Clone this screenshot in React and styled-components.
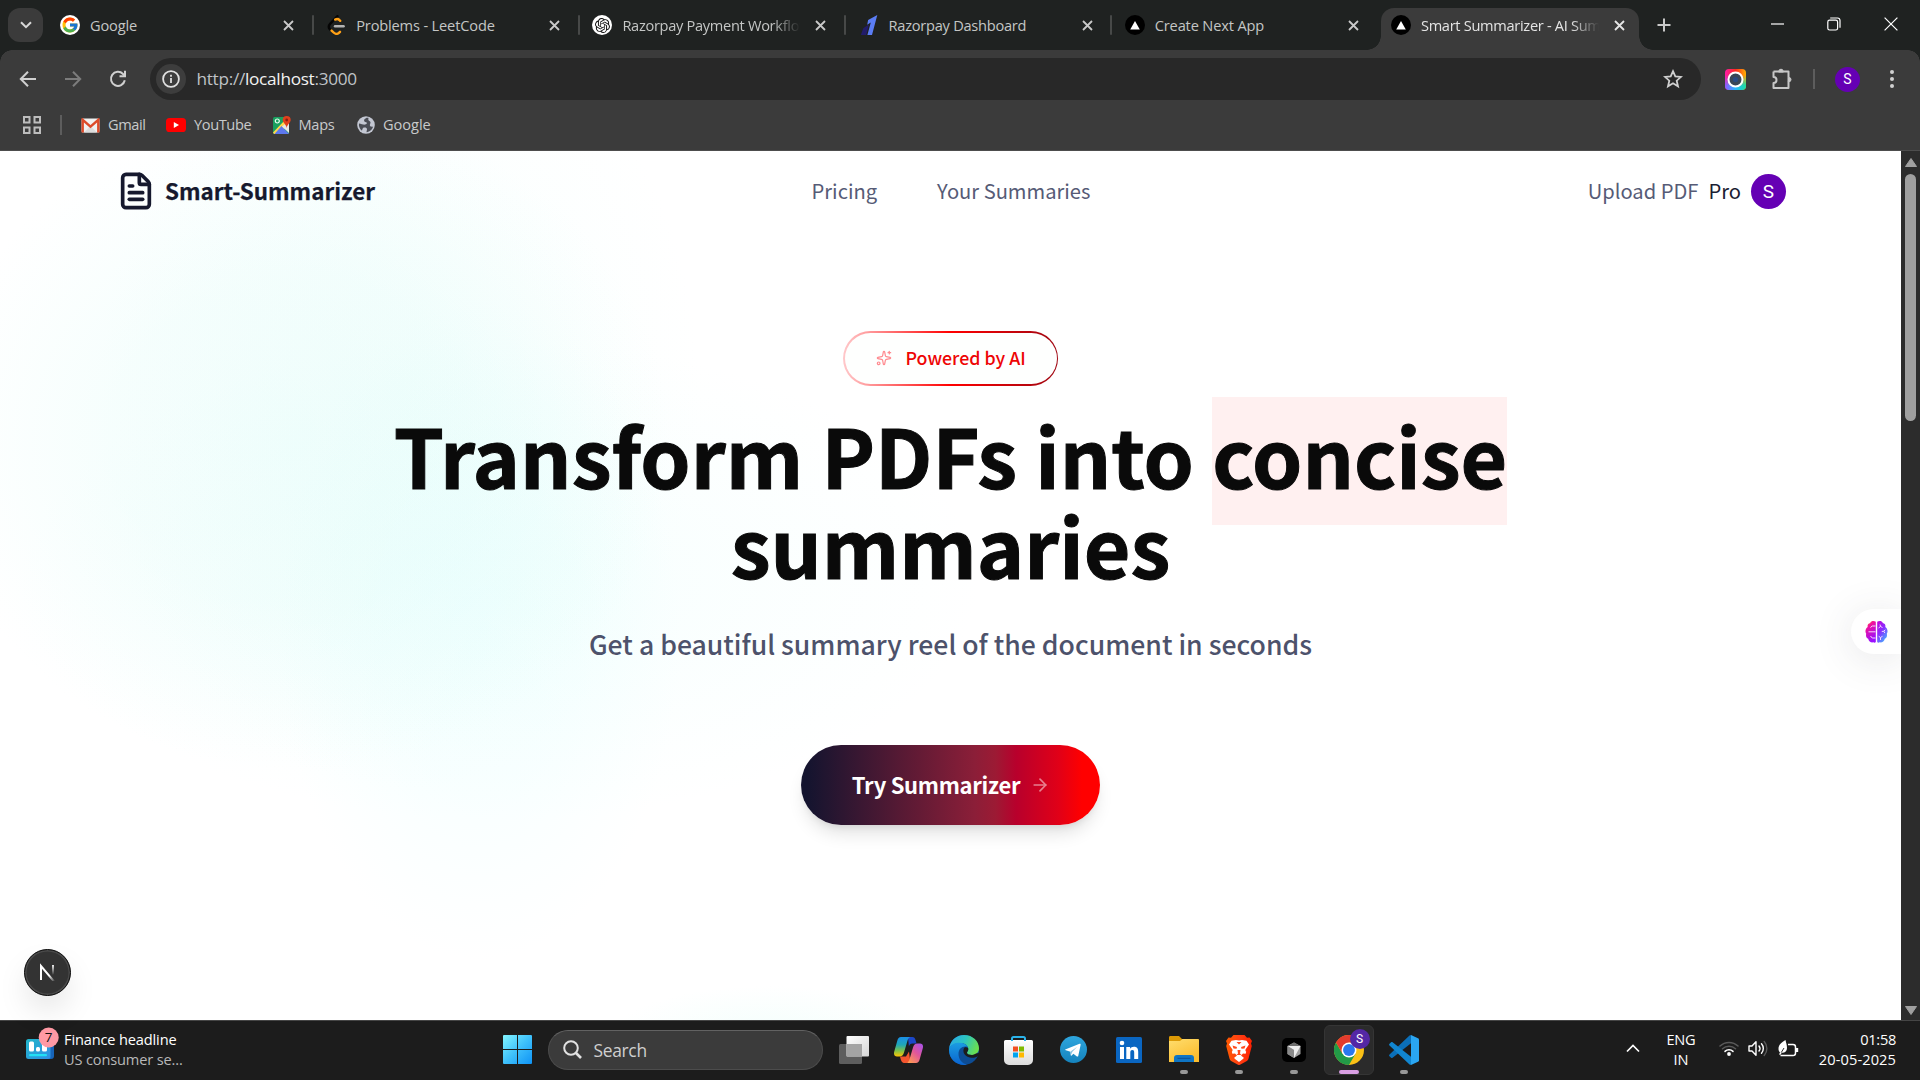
import React from "react";
import styled, { createGlobalStyle, css } from "styled-components";
import { FileText, Sparkles, ArrowRight } from "lucide-react";
import { FcGoogle } from "react-icons/fc";
import { SiOpenai } from "react-icons/si";

const Global = createGlobalStyle`
  *, *::before, *::after { box-sizing: border-box; }
  html, body { margin: 0; padding: 0; overflow: hidden; background: #fff; }
  svg { display: block; flex: none; }
`;

const ui = `"Open Sans", "Noto Sans", sans-serif`;
const brand = `"Noto Sans CJK SC", "Open Sans", sans-serif`;

const Screen = styled.div`
  width: 1920px;
  height: 1080px;
  display: flex;
  flex-direction: column;
  overflow: hidden;
  font-family: ${ui};
`;

/* ---------- browser frame ---------- */

const TabStrip = styled.div`
  height: 50px;
  flex: none;
  display: flex;
  align-items: flex-end;
  padding-left: 8px;
  background: #1f2221;
`;

const TabSearch = styled.div`
  width: 35px;
  height: 34px;
  margin: 0 7px 8px 0;
  border-radius: 12px;
  background: #3b3b3b;
  display: grid;
  place-items: center;
`;

const TabBox = styled.div`
  width: ${(p) => (p.$active ? 258 : 266.2)}px;
  height: 42px;
  flex: none;
  display: flex;
  align-items: center;
  padding: 0 0 8px 10px;
  position: relative;
  color: ${(p) => (p.$active ? "#e4e4e4" : "#c4c6c5")};
  ${(p) =>
    p.$active &&
    css`
      background: #3b3b3b;
      border-radius: 13px 13px 0 0;
      &::before, &::after {
        content: "";
        position: absolute;
        bottom: 0;
        width: 14px;
        height: 14px;
      }
      &::before {
        left: -14px;
        background: radial-gradient(circle at 0 0, transparent 13.5px, #3b3b3b 14px);
      }
      &::after {
        right: -14px;
        background: radial-gradient(circle at 100% 0, transparent 13.5px, #3b3b3b 14px);
      }
    `}
`;

const Favicon = styled.span`
  width: 20px;
  height: 20px;
  flex: none;
  border-radius: 50%;
  display: grid;
  place-items: center;
  background: ${(p) => p.$bg || "transparent"};
`;

const TabTitle = styled.span`
  width: 178px;
  flex: none;
  margin-left: 10px;
  overflow: hidden;
  white-space: nowrap;
  font-size: 14.6px;
  line-height: 22px;
  letter-spacing: ${(p) => p.$ls}px;
  ${(p) => p.$fade && css`mask-image: linear-gradient(90deg, #000 150px, transparent 178px);`}
`;

const TabClose = styled.span`
  width: 18px;
  margin-left: 11.5px;
  display: grid;
  place-items: center;
`;

const TabDivider = styled.span`
  width: 2px;
  height: 20px;
  margin-left: 14px;
  border-radius: 1px;
  background: #474948;
`;

const NewTab = styled.div`
  height: 50px;
  padding: 0 0 0 18px;
  display: flex;
  align-items: center;
`;

const WindowControls = styled.div`
  margin-left: auto;
  height: 50px;
  width: 171.5px;
  padding-bottom: 2px;
  display: grid;
  grid-template-columns: repeat(3, 57px);
  justify-items: center;
  align-items: center;
`;

const Toolbar = styled.div`
  height: 101px;
  flex: none;
  background: #3b3b3b;
  border-bottom: 1px solid #4d4d4d;
  position: relative;
  &::before {
    content: "";
    position: absolute;
    inset: 0 0 auto 0;
    height: 12px;
    background:
      radial-gradient(circle at 12px 12px, transparent 11.5px, #1f2221 12px) left / 12px 12px no-repeat,
      radial-gradient(circle at 0 12px, transparent 11.5px, #1f2221 12px) right / 12px 12px no-repeat;
  }
`;

const NavRow = styled.div`
  height: 58px;
  display: flex;
  align-items: center;
`;

const NavIcons = styled.div`
  width: 150px;
  flex: none;
  padding: 0 23.5px 1px 18.5px;
  display: flex;
  justify-content: space-between;
`;

const Omnibox = styled.div`
  width: 1551px;
  height: 42px;
  flex: none;
  border-radius: 21px;
  background: #282828;
  display: flex;
  align-items: center;
  padding: 0 18.5px 0 6px;
`;

const SiteInfo = styled.span`
  width: 30px;
  height: 30px;
  border-radius: 50%;
  background: #3d3d3d;
  display: grid;
  place-items: center;
`;

const Url = styled.span`
  flex: 1;
  margin-left: 10.5px;
  font-size: 17.2px;
  line-height: 24px;
  letter-spacing: -0.28px;
  color: #bfc2c6;
  b { font-weight: 400; color: #f2f2f2; }
`;

const Extensions = styled.div`
  flex: 1;
  display: flex;
  align-items: center;
  padding-left: 24px;
`;

const PuzzleSlot = styled.span`
  margin-left: 25px;
`;

const ToolDivider = styled.span`
  width: 2px;
  height: 20px;
  margin: 0 20px 0 20px;
  background: #5d5d5d;
`;

const MenuDots = styled.span`
  margin-left: 30px;
`;

const Avatar = styled.span`
  width: ${(p) => p.$size}px;
  height: ${(p) => p.$size}px;
  flex: none;
  border-radius: 50%;
  background: ${(p) => p.$bg || "#6500b4"};
  color: #fff;
  display: grid;
  place-items: center;
  font: 400 ${(p) => p.$font}px/1 Roboto, sans-serif;
`;

const Bookmarks = styled.div`
  height: 34px;
  display: flex;
  align-items: center;
  padding-left: 23px;
`;

const BookmarkDivider = styled.span`
  width: 2px;
  height: 20px;
  margin: 0 19px 0 19px;
  background: #5d5d5d;
`;

const Bookmark = styled.span`
  display: flex;
  align-items: center;
  gap: 8px;
  width: ${(p) => p.$w}px;
  color: #c8cacb;
  font-size: 14.6px;
  line-height: 20px;
  letter-spacing: ${(p) => p.$ls}px;
`;

const BookmarkLabel = styled.span`
  margin-bottom: 2px;
`;

/* ---------- page ---------- */

const Viewport = styled.div`
  flex: 1;
  min-height: 0;
  display: flex;
`;

const Page = styled.main`
  flex: 1;
  position: relative;
  font-family: ${brand};
  background:
    radial-gradient(ellipse 200px 330px at 480px 480px, rgba(222, 255, 255, 0.28), rgba(222, 255, 255, 0.18) 50%, rgba(255, 255, 255, 0) 100%),
    radial-gradient(ellipse 370px 330px at 300px 290px, rgba(218, 252, 247, 0.33), rgba(218, 252, 247, 0.25) 50%, rgba(255, 255, 255, 0) 100%),
    radial-gradient(ellipse 480px 240px at 500px 430px, rgba(226, 254, 252, 0.3), rgba(226, 254, 252, 0.12) 60%, rgba(255, 255, 255, 0) 100%),
    radial-gradient(ellipse 300px 400px at 400px 240px, rgba(224, 253, 249, 0.25), rgba(224, 253, 249, 0.1) 60%, rgba(255, 255, 255, 0) 100%),
    radial-gradient(ellipse 160px 50px at 770px 885px, rgba(226, 253, 247, 0.4), rgba(255, 255, 255, 0) 100%),
    #fff;
`;

const Header = styled.header`
  height: 80px;
  padding: 0 115px 0 116px;
  display: grid;
  grid-template-columns: 1fr auto 1fr;
  align-items: center;
`;

const Logo = styled.div`
  display: flex;
  align-items: center;
  gap: 9px;
  color: #16192e;
  font-size: 22.4px;
  font-weight: 700;
  line-height: 35px;
`;

const LogoText = styled.span`
  margin-bottom: 2px;
  -webkit-text-stroke: 0.25px #16192e;
`;

const Links = styled.nav`
  display: flex;
  gap: 60px;
`;

const NavLink = styled.span`
  margin-bottom: 2px;
  font-size: 20.15px;
  line-height: 35px;
  color: ${(p) => (p.$dark ? "#1b1d33" : "#565b76")};
`;

const Account = styled.div`
  display: flex;
  align-items: center;
  justify-content: flex-end;
  gap: 10px;
`;

const Hero = styled.section`
  display: flex;
  flex-direction: column;
  align-items: center;
  padding-top: 100px;
`;

const PoweredPill = styled.div`
  width: 215px;
  height: 55px;
  padding: 1.5px 1.5px 2.5px 1.5px;
  border-radius: 28px;
  background: linear-gradient(90deg, #ffc9cb, #ff0000 50%, #9f0712);
`;

const PoweredInner = styled.div`
  height: 100%;
  border-radius: 26px;
  background: #fefffe;
  display: flex;
  align-items: center;
  padding: 0 0 3px 31px;
  gap: 14px;
  color: #ee0505;
  font-size: 17.8px;
  font-weight: 500;
  line-height: 26px;
  svg { color: #ff8a8f; margin-top: 3px; }
`;

const Title = styled.h1`
  width: 1240px;
  margin: 23px 0 0;
  text-align: center;
  font-size: 80.4px;
  font-weight: 700;
  line-height: 90px;
  color: #0a0a0a;
  -webkit-text-stroke: 1px #0a0a0a;
`;

const Mark = styled.span`
  display: inline-block;
  height: 90px;
  background: #fff0f0;
  box-shadow: 0 -12px 0 #fff0f0, 0 26px 0 #fff0f0;
`;

const Subtitle = styled.p`
  margin: 35px 0 0;
  font-size: 26.6px;
  font-weight: 500;
  line-height: 40px;
  color: #4d526b;
`;

const Cta = styled.button`
  width: 299px;
  height: 80px;
  margin-top: 81px;
  padding: 0 0 0 1px;
  border: 0;
  border-radius: 40px;
  display: flex;
  align-items: center;
  justify-content: center;
  gap: 10px;
  color: #fff;
  font-family: ${brand};
  font-size: 22px;
  font-weight: 700;
  letter-spacing: -0.32px;
  background: linear-gradient(90deg, #14142f 0%, #14142f 2%, #8b1e38 58%, #9c1a34 65%, #b8002c 72%, #e00018 86%, #ff0000 94%);
  box-shadow: 0 12px 18px -4px rgba(0, 0, 0, 0.12), 0 5px 8px -5px rgba(0, 0, 0, 0.12);
  svg { opacity: 0.5; }
`;

const CtaText = styled.span`
  margin-bottom: 3px;
`;

const NextBadge = styled.div`
  position: absolute;
  left: 23.5px;
  bottom: 24px;
  width: 47.5px;
  height: 47.5px;
  border-radius: 50%;
  background: #333;
  border: 1.5px solid #0c0c0c;
  box-shadow: inset 0 0 0 1.5px #4a4a4a, 0 16px 32px -4px rgba(0, 0, 0, 0.13);
  display: grid;
  place-items: center;
`;

const SidePill = styled.div`
  position: absolute;
  right: 0;
  top: 458px;
  width: 50px;
  height: 45px;
  border-radius: 23px 0 0 23px;
  background: #fff;
  box-shadow: 0 5px 40px rgba(60, 60, 80, 0.13);
  clip-path: inset(-60px 0 -60px -80px);
  display: flex;
  align-items: center;
  padding-left: 14px;
`;

const Scrollbar = styled.div`
  width: 19px;
  background: #2c2c2c;
  display: flex;
  flex-direction: column;
  align-items: center;
  padding: 7px 0 5px;
`;

const Thumb = styled.div`
  width: 11px;
  height: 247px;
  margin: 7px 0 auto;
  border-radius: 6px;
  background: #9f9f9f;
`;

/* ---------- taskbar ---------- */

const Taskbar = styled.footer`
  height: 60px;
  flex: none;
  background: #1c1c1c;
  border-top: 1px solid #454545;
  display: grid;
  grid-template-columns: 1fr auto 1fr;
  color: #fff;
`;

const Widget = styled.div`
  display: flex;
  align-items: center;
  padding: 0 0 4px 26px;
  gap: 5px;
  svg { margin-top: -12px; }
`;

const WidgetText = styled.div`
  font-size: 14.6px;
  line-height: 20px;
  letter-spacing: -0.15px;
  color: ${(p) => (p.$dim ? "#b8b8b8" : "#fff")};
`;

const Apps = styled.div`
  display: flex;
  align-items: center;
  padding: 0 0 2px 3.5px;
`;

const StartSlot = styled.div`
  width: 55px;
  padding-left: 10px;
`;

const SearchPill = styled.div`
  width: 275px;
  height: 40px;
  margin: 0 3.5px 0 0;
  border-radius: 20px;
  background: #3b3b3b;
  border: 1px solid #4c4c4c;
  border-top-color: #626262;
  display: flex;
  align-items: center;
  gap: 12px;
  padding-left: 14px;
  font-size: 17.4px;
  letter-spacing: -0.3px;
  color: #cfcfcf;
`;

const Slot = styled.div`
  width: 50px;
  height: 50px;
  margin: 0 2.5px;
  border-radius: 6px;
  display: grid;
  place-items: center;
  position: relative;
  ${(p) => p.$active && css`background: #2b2b2b; border: 1px solid #353535;`}
  &::after {
    content: "";
    display: ${(p) => (p.$run || p.$active ? "block" : "none")};
    position: absolute;
    bottom: ${(p) => (p.$active ? 0 : 1)}px;
    left: 50%;
    transform: translateX(-50%);
    width: ${(p) => (p.$active ? 20 : 8)}px;
    height: 4px;
    border-radius: 2px;
    background: ${(p) => (p.$active ? "#d99fe3" : "#989898")};
  }
`;

const Overlay = styled.span`
  position: absolute;
  top: 3px;
  right: 3px;
`;

const Tray = styled.div`
  display: flex;
  align-items: center;
  justify-content: flex-end;
  padding: 0 24px 4px 0;
  font-size: 14.6px;
  line-height: 20px;
`;

const Lang = styled.div`
  width: 40px;
  margin: 0 18px 0 21px;
  text-align: center;
  letter-spacing: -0.3px;
`;

const Status = styled.div`
  display: flex;
  align-items: center;
  gap: 9.5px;
  margin-right: 20px;
`;

const Clock = styled.div`
  text-align: right;
  letter-spacing: ${(p) => p.$ls}px;
`;

/* ---------- icons ---------- */

const NextFavicon = () => (
  <Favicon $bg="#000">
    <svg width="10" height="9" viewBox="0 0 10 9"><path d="M5 0 9.8 8.6H.2Z" fill="#fff" /></svg>
  </Favicon>
);

const LeetIcon = () => (
  <svg width="18" height="20" viewBox="0 0 18 20" fill="none" strokeWidth="2.4" strokeLinecap="round">
    <path d="M10.500 1.200 3.300 8.600c-1.800 1.800-1.800 4.200-.1 6" stroke="#050505" />
    <path d="M4.600 15.600 6.600 17.500c1.800 1.800 4 1.800 5.600.1l.8-.8M8.200 4.600c1.500-.9 3-.7 4.200.4l.8.800" stroke="#ffa116" />
    <path d="M8 11.200h8.600" stroke="#b3b3b3" />
  </svg>
);

const RazorIcon = () => (
  <svg width="18" height="20" viewBox="0 0 18 20">
    <path d="M3.3 13.2 9 9.3 6.2 20H.8Z" fill="#221c6b" />
    <path d="M8.1 4.900 17.300 0 12 20H7.400L10.800 7.400 7.200 9.700Z" fill="#5b7df5" />
  </svg>
);

const CloseGlyph = ({ color }) => (
  <svg width="11" height="11" viewBox="0 0 11 11" stroke={color} strokeWidth="1.8"><path d="M1 1 10 10M10 1 1 10" /></svg>
);

const Gmail = () => (
  <svg width="19" height="15" viewBox="0 0 19 15">
    <rect x=".5" y=".5" width="18" height="14" rx="1.5" fill="#f1f1f1" />
    <path d="M3 14.5 9.5 8 16 14.5Z" fill="#dcdcdc" />
    <path d="M1.700 14.500V1.800L9.500 8.600 17.300 1.800V14.500" fill="none" stroke="#dd4b2a" strokeWidth="2.4" />
  </svg>
);

const YouTube = () => (
  <svg width="20" height="14" viewBox="0 0 20 14"><rect width="20" height="14" rx="3.6" fill="#f00" /><path d="M7.8 4 13 7 7.8 10Z" fill="#fff" /></svg>
);

const Maps = () => (
  <svg width="18" height="18" viewBox="0 0 18 18">
    <rect y="1" width="16" height="17" rx="1.5" fill="#19a05f" />
    <path d="M0 16.500 12 4h4v4L6 18H1Z" fill="#ffd84a" />
    <path d="M8.500 10 16 18H1.500Z" fill="#5d78ee" />
    <path d="M9 10.500 16 5v12Z" fill="#e8e8e8" />
    <circle cx="4.300" cy="5" r="2" fill="none" stroke="#eafff3" strokeWidth="1.2" />
    <path d="M13.700 0a4 4 0 0 1 4 4c0 2.800-3.400 4-4 8-.6-4-4-5.200-4-8a4 4 0 0 1 4-4Z" fill="#e0401c" />
    <circle cx="13.700" cy="4" r="1.400" fill="#8c1f12" />
  </svg>
);

const Globe = () => (
  <svg width="18" height="18" viewBox="0 0 18 18">
    <circle cx="9" cy="9" r="8.8" fill="#c3c7d2" />
    <path d="M9.500 1.800c-1.400 1-2.600 1.600-2.400 3.100.2 1 2 .8 2.600 1.700.7 1-.4 1.800-1.700 2C6.600 8.800 4 8 2 7.600 1.500 10 2.500 13 5 14.800c.6-1.500.4-2.800 1.800-3.200 1.600-.4 3.200.2 3.200 1.600 0 1.200-.6 1.900-.4 3 3.200-.2 5.900-2.700 6.500-5.600-1.200.4-2.900.2-3.200-1-.3-1.300.9-2.100.6-3.300-.3-1.100-1.900-1.300-2.200-2.500-.1-.8.3-1.500.2-2Z" fill="#4a4d55" />
  </svg>
);

const Camera = () => (
  <svg width="21" height="21" viewBox="0 0 21 21">
    <defs>
      <linearGradient id="camA" x1="0" y1="0" x2="1" y2="0"><stop stopColor="#ff1aa8" /><stop offset=".5" stopColor="#ff2a20" /><stop offset="1" stopColor="#ffb000" /></linearGradient>
      <linearGradient id="camB" x1="0" y1="0" x2="1" y2="0"><stop stopColor="#8f5bff" /><stop offset=".5" stopColor="#29b6ff" /><stop offset="1" stopColor="#19e0a0" /></linearGradient>
      <linearGradient id="camC" x1="0" y1="0" x2="0" y2="1"><stop offset=".3" stopColor="#fff" stopOpacity="0" /><stop offset=".8" stopColor="#fff" /></linearGradient>
      <mask id="camM"><rect width="21" height="21" fill="url(#camC)" /></mask>
    </defs>
    <rect width="21" height="21" rx="4" fill="url(#camA)" />
    <rect width="21" height="21" rx="4" fill="url(#camB)" mask="url(#camM)" />
    <circle cx="10.500" cy="10.500" r="7" fill="#3a4656" stroke="#fff" strokeWidth="2" />
    <circle cx="10.500" cy="10.500" r="2.600" fill="#2a4a80" />
  </svg>
);

const Puzzle = () => (
  <svg width="22" height="22" viewBox="0 0 22 22" fill="none" stroke="#c7c7c7" strokeWidth="2" strokeLinejoin="round">
    <path d="M2.500 3.600H8M12 3.600h5.500V9.500M17.500 13.500V20h-15v-5a3 3 0 0 0 0-6V3.600" />
    <path d="M7.800 4.200V3.400a2.200 2.200 0 0 1 4.400 0v.8ZM17 9.400h.8a2.200 2.200 0 0 1 0 4.400H17Z" fill="#c7c7c7" strokeWidth="1" />
  </svg>
);

const Brain = () => (
  <svg width="23" height="24" viewBox="0 0 23 24">
    <defs>
      <linearGradient id="brL" x1="0" y1="0" x2=".4" y2="1"><stop stopColor="#ffb300" /><stop offset=".3" stopColor="#f2109b" /><stop offset="1" stopColor="#9a10ff" /></linearGradient>
      <linearGradient id="brR" x1="0" y1="0" x2=".6" y2="1"><stop stopColor="#c400d8" /><stop offset=".5" stopColor="#8a2cff" /><stop offset="1" stopColor="#4aa8ff" /></linearGradient>
    </defs>
    <path d="M10.800 1.800C9 .4 6 .8 5.200 2.900 3 3.200 2.200 5.300 2.700 7 .6 8.200-.3 11.500 1.200 13.800c-.6 2 .2 4.200 2 4.900.4 2.700 3 4.200 5.200 3.600.9.600 1.800.3 2.400-.2Z" fill="url(#brL)" />
    <path d="M12.200 1.800C14 .4 17 .8 17.800 2.900c2.200.3 3 2.400 2.500 4.100 2.100 1.200 3 4.500 1.500 6.800.6 2-.2 4.200-2 4.900-.4 2.700-3 4.200-5.200 3.600-.9.600-1.800.3-2.400-.2Z" fill="url(#brR)" />
    <path d="M10.500 6H7.200L5.500 7.500M10.500 11.800H3.500M10.500 18H7.200L5.500 16M13.500 8l2-1.500L15 4.500M15.500 6.500l2 1M16.800 11.500l2-.3 1.500-1.400M18.800 11.200l1 1.800M15.500 20v-2.500l-1.800-1.200M15.500 17.500l2-1.200" fill="none" stroke="#f6d8ff" strokeWidth="1" />
  </svg>
);

const Finance = () => (
  <svg width="33" height="34" viewBox="0 0 33 34">
    <defs><linearGradient id="fin" x1="0" y1="0" x2="1" y2="1"><stop stopColor="#21b5c9" /><stop offset="1" stopColor="#2f8fe6" /></linearGradient></defs>
    <rect x="20" y="13" width="8" height="20" rx="3" fill="#1764b8" />
    <rect x="0" y="13" width="24.500" height="20" rx="2.500" fill="url(#fin)" />
    <rect x="3" y="15.500" width="5" height="10" rx="1.500" fill="#fff" />
    <rect x="10" y="21" width="4" height="4.500" rx="1.500" fill="#fff" />
    <rect x="16" y="17" width="5" height="8.500" rx="1.500" fill="#fff" />
    <rect x="3" y="28" width="18" height="2.200" rx="1" fill="#22e0f5" />
    <circle cx="22.700" cy="11.500" r="10" fill="#ff99a4" />
    <text x="22.500" y="16.300" textAnchor="middle" fontSize="13.500" fontFamily="Open Sans, sans-serif" fill="#111">7</text>
  </svg>
);

const Windows = () => (
  <svg width="29" height="29" viewBox="0 0 29 29">
    <defs><linearGradient id="win" gradientUnits="userSpaceOnUse" x1="0" y1="0" x2="29" y2="29"><stop stopColor="#83f5ff" /><stop offset=".5" stopColor="#3fc1fb" /><stop offset="1" stopColor="#0f93f5" /></linearGradient></defs>
    <path d="M1 0h13v14H0V1a1 1 0 0 1 1-1ZM15 0h13a1 1 0 0 1 1 1v13H15ZM0 15h14v14H1a1 1 0 0 1-1-1ZM15 15h14v13a1 1 0 0 1-1 1H15Z" fill="url(#win)" />
  </svg>
);

const TaskView = () => (
  <svg width="30" height="28" viewBox="0 0 30 28">
    <defs><linearGradient id="tv" x1="0" y1="0" x2="1" y2="1"><stop stopColor="#fff" /><stop offset="1" stopColor="#d6d6d6" /></linearGradient></defs>
    <rect x="0" y="8" width="23" height="20" rx="1.500" fill="#5e5e5e" />
    <rect x="7.500" y="0" width="22.500" height="20.500" rx="1" fill="url(#tv)" />
    <rect x="7.500" y="8" width="15.500" height="12.500" fill="#a4a4a4" />
  </svg>
);

const Copilot = () => (
  <svg width="29" height="26" viewBox="0 0 29 26">
    <defs>
      <linearGradient id="cpA" x1="0" y1="0" x2="0" y2="1"><stop stopColor="#1b8fe8" /><stop offset=".4" stopColor="#1fa7b8" /><stop offset=".7" stopColor="#7cc24a" /><stop offset="1" stopColor="#ffc400" /></linearGradient>
      <linearGradient id="cpB" x1="1" y1="0" x2=".2" y2="1"><stop stopColor="#a551f0" /><stop offset=".5" stopColor="#e0569a" /><stop offset="1" stopColor="#ff9b52" /></linearGradient>
    </defs>
    <path d="M14 0h4.500c1.600 0 2.500 1.200 3 3l1 3.500h-4c-2 0-3 1-3.600 3Z" fill="#1c47c8" />
    <path d="M6 19.500h6l3-5 1 8c-.5 2-1.500 3.500-3.500 3.500h-2C8 26 7 24 6 19.500Z" fill="#f4552e" />
    <path d="M7 0h9.500c-1.700.4-2.500 2-3.100 4L10 15.500c-.8 2.800-2 4-4.500 4H3c-2.500 0-3.500-2-2.800-4.800L3.300 3.800C4 1.200 5 0 7 0Z" fill="url(#cpA)" />
    <path d="M22 26h-9.500c1.700-.4 2.500-2 3.100-4L19 10.500c.8-2.800 2-4 4.500-4H26c2.500 0 3.500 2 2.800 4.800L25.700 22.200C25 24.800 24 26 22 26Z" fill="url(#cpB)" />
  </svg>
);

const Edge = () => (
  <svg width="30" height="30" viewBox="0 0 30 30">
    <defs>
      <linearGradient id="edA" x1="0" y1=".2" x2="1" y2=".5"><stop stopColor="#2aa8e8" /><stop offset=".5" stopColor="#2cc5c0" /><stop offset="1" stopColor="#6be04e" /></linearGradient>
      <linearGradient id="edB" x1="0" y1="0" x2="0" y2="1"><stop stopColor="#1b9de2" /><stop offset="1" stopColor="#0a63cf" /></linearGradient>
    </defs>
    <circle cx="15" cy="15" r="15" fill="#0d4c94" />
    <path d="M.1 13.500C1 5.800 7.300 0 15 0c9 0 15 6.500 15 13.200 0 4.300-3.300 6.800-7 6.800-3 0-5-1-5-2.300 0-.9 1.300-1.500 1.300-3.600C19.300 10.800 16 8 11.500 8 6 8 1.500 10.500.1 13.500Z" fill="url(#edA)" />
    <path d="M.1 13.500C1.500 9.800 5.500 7.800 10 7.800c4.500 0 7.500 1.800 8.800 4.200-5-1.700-9.300 1.500-9.300 7 0 5 3.200 9.300 8.500 10.700C8.500 31.500 0 24.500 0 15Z" fill="url(#edB)" />
    <path d="M15.500 12.500c-2 2.500-1.500 7 3 9.300 3.500 1.500 7.500.9 9.800-.4.600-.3 1 .1.700.7-.3.600-.7 1.200-1 1.700L30.500 18 27 18.600c-1.200.9-2.600 1.400-4 1.400-3 0-5-1-5-2.300 0-.9 1.300-1.500 1.300-3.600 0-1.300-1.800-2.300-3.800-1.600Z" fill="#1c1c1c" />
  </svg>
);

const Store = () => (
  <svg width="29" height="30" viewBox="0 0 29 30">
    <defs><linearGradient id="st" x1="0" y1="0" x2="0" y2="1"><stop stopColor="#fff" /><stop offset="1" stopColor="#dcdcdc" /></linearGradient></defs>
    <path d="M8 7V3.500C8 2.500 8.500 2 9.500 2h10c1 0 1.500.5 1.500 1.500V7" fill="none" stroke="#2bb3ea" strokeWidth="2" />
    <path d="M0 6.500a1.500 1.500 0 0 1 1.500-1.500h26A1.500 1.500 0 0 1 29 6.500V25a5 5 0 0 1-5 5H5a5 5 0 0 1-5-5Z" fill="url(#st)" />
    <path d="M8 6V5M21 6V5" stroke="#2bb3ea" strokeWidth="2" />
    <path d="M9 11.500h5v5H9Z" fill="#f25022" /><path d="M15 11.500h5v5h-5Z" fill="#7fba00" />
    <path d="M9 17.500h5v5H9Z" fill="#00a4ef" /><path d="M15 17.500h5v5h-5Z" fill="#ffb900" />
  </svg>
);

const Telegram = () => (
  <svg width="27" height="27" viewBox="0 0 27 27">
    <defs><linearGradient id="tg" x1="0" y1="0" x2="0" y2="1"><stop stopColor="#2ea6de" /><stop offset="1" stopColor="#1583bd" /></linearGradient></defs>
    <circle cx="13.500" cy="13.500" r="13.500" fill="url(#tg)" />
    <path d="M5.800 13.200 19.600 7.800c.8-.2 1.200.2 1 1.200l-2.300 10.800c-.2.900-.7 1-1.400.6l-3.500-2.600-1.800 1.700c-.4.400-.9.300-.9-.4l-.2-3.300-4.700-1.500c-.9-.3-.9-.8 0-1.100Z" fill="#fff" />
    <path d="m10.600 15.500 6.600-4.700-5 5.300-.5 2.700Z" fill="#8fc6e2" />
  </svg>
);

const LinkedIn = () => (
  <svg width="26" height="26" viewBox="0 0 26 26">
    <rect width="26" height="26" rx="1.500" fill="#0a66c2" />
    <circle cx="6" cy="6" r="2.300" fill="#fff" />
    <path d="M4 10h4v12H4ZM10.300 10h3.800v1.700c.7-1.200 2-2 3.800-2 3.500 0 4.300 2.200 4.300 5.400V22h-4v-6c0-1.700-.2-3-1.900-3-1.600 0-2 1.300-2 2.900V22h-4Z" fill="#fff" />
  </svg>
);

const Folder = () => (
  <svg width="30" height="27" viewBox="0 0 30 27">
    <defs><linearGradient id="fd" x1="0" y1="0" x2=".6" y2="1"><stop stopColor="#ffdd6e" /><stop offset="1" stopColor="#fbbd2e" /></linearGradient></defs>
    <path d="M0 1.500C0 .5.500 0 1.500 0H10l3 3h15.500c1 0 1.500.5 1.500 1.500V8H0Z" fill="#dc9a06" />
    <path d="M0 5h11l2.500-2H28.500c1 0 1.500.5 1.500 1.500V26H0Z" fill="url(#fd)" />
    <path d="M5 22c0-2 1-3 3-3h14c2 0 3 1 3 3v4H5Z" fill="#0f75c4" /><path d="M8.500 22.300h13" stroke="#0a4f96" />
  </svg>
);

const BraveMark = () => (
  <svg width="26" height="30" viewBox="0 0 26 30">
    <defs><linearGradient id="bv" x1="0" y1="0" x2="1" y2="0"><stop stopColor="#ff5a00" /><stop offset=".5" stopColor="#ff4014" /><stop offset="1" stopColor="#ff2000" /></linearGradient></defs>
    <path d="M7.500 0h11l2.500 2.800 2.500-.3L26 6l-1 2.500.8 2.400-3.200 12.300c-.4 1.500-1 2.200-2.200 3L14 29.700c-.7.400-1.300.4-2 0l-6.400-3.500c-1.200-.8-1.800-1.500-2.200-3L.2 10.900 1 8.500 0 6l2.500-3.500 2.500.3Z" fill="url(#bv)" />
    <path d="M13 5.500 16 5l4.500.8L23 9.500l-3.300 4.800c-.6.900-.2 1.700.5 2.500l-.6 2-2.600-.3-2 2 2.800 2.200-.5 1L13 27l-4.300-3.300-.5-1L11 20.500l-2-2-2.600.3-.6-2c.7-.8 1.100-1.600.5-2.500L3 9.500l2.500-3.700L10 5Z" fill="#fff" />
    <path d="M6.500 10.500 11 12l-.5 1.800-3-.3ZM19.500 10.500 15 12l.5 1.800 3-.3ZM11.500 15h3L14 18.500l1.500 1.500h-5l1.500-1.500ZM10.500 7h5L13 9.500Z" fill="#ff4a1c" />
  </svg>
);

const Cursor = () => (
  <svg width="24" height="24" viewBox="0 0 24 24">
    <rect width="24" height="24" rx="5" fill="#000" />
    <path d="M12 4.500 18.500 8v8L12 20 5.500 16V8Z" fill="#a0a0a0" /><path d="M12 4.500 18.500 8h-13Z" fill="#6d6d6d" />
    <path d="M5.500 8h13L12 20v-8Z" fill="#eee" /><path d="M5.500 8 12 12v8l-6.500-4Z" fill="#8a8a8a" />
  </svg>
);

const Chrome = () => (
  <svg width="30" height="30" viewBox="0 0 48 48">
    <circle cx="24" cy="24" r="24" fill="#fbc116" />
    <path d="M3.200 12A24 24 0 0 0 24 48L34.400 30 24 24 13.600 30Z" fill="#229a47" />
    <path d="M3.200 12 13.600 30 24 12h20.800A24 24 0 0 0 3.200 12Z" fill="#e33b2e" />
    <circle cx="24" cy="24" r="12" fill="#fff" /><circle cx="24" cy="24" r="9.500" fill="#2a78ee" />
  </svg>
);

const VsCode = () => (
  <svg width="30" height="30" viewBox="0 0 30 30">
    <path d="M22 0 29 3.300c.6.300 1 .8 1 1.500v20.400c0 .7-.4 1.200-1 1.500L22 30Z" fill="#2aa6f2" />
    <path d="M22 0v8.200L3.600 22.800c-.5.400-1.100.4-1.500 0L.5 21.300c-.6-.5-.6-1.200 0-1.700L20.500.6Z" fill="#0b6fb8" />
    <path d="M22 30v-8.200L3.600 7.200c-.5-.4-1.100-.4-1.500 0L.5 8.700c-.6.500-.6 1.200 0 1.700l20 19Z" fill="#1186d0" />
  </svg>
);

const Wifi = () => (
  <svg width="20" height="15" viewBox="0 0 20 15" fill="none" strokeWidth="1.500" strokeLinecap="round">
    <path d="M1 5a13 13 0 0 1 18 0M3.500 7.800a9.300 9.300 0 0 1 13 0" stroke="#5a5a5a" />
    <path d="M6 10.400a5.700 5.700 0 0 1 8 0" stroke="#fff" /><circle cx="10" cy="13" r="1.900" fill="#fff" />
  </svg>
);

const Speaker = () => (
  <svg width="20" height="17" viewBox="0 0 20 17" fill="none" stroke="#fff" strokeWidth="1.400" strokeLinecap="round" strokeLinejoin="round">
    <path d="M1 6h3l4-4.200v13.400L4 11H1ZM11 6c1.200 1.500 1.200 3.500 0 5M13.500 3.800c2.400 2.700 2.400 6.700 0 9.400" /><path d="M16.200 1.500c3.600 4 3.600 10 0 14" stroke="#5a5a5a" />
  </svg>
);

const Battery = () => (
  <svg width="21" height="18" viewBox="0 0 21 18">
    <path d="M10 4.500H15a2.500 2.500 0 0 1 2.500 2.500v6A2.500 2.500 0 0 1 15 15.500H2.500" fill="none" stroke="#fff" strokeWidth="1.500" />
    <path d="M18 8h2.200v4H18Z" fill="#fff" />
    <path d="M7.500 0C3 2.500.5 5 .5 9c0 1.500.7 2.800 1.500 3.500L1 14.500l1.500.3 1.300-2C7 13 9 11 9 8c0-3-1-5.500-1.500-8Z" fill="#fff" />
    <path d="M3.200 12.600 6 8" stroke="#1c1c1c" strokeWidth=".9" />
  </svg>
);

const tabs = [
  { title: "Google", icon: <Favicon $bg="#fff"><FcGoogle size={18} /></Favicon>, ls: -0.15 },
  { title: "Problems - LeetCode", icon: <Favicon><LeetIcon /></Favicon>, ls: -0.15 },
  { title: "Razorpay Payment Workflow", icon: <Favicon $bg="#fff"><SiOpenai size={15} color="#111" /></Favicon>, ls: -0.3, fade: true },
  { title: "Razorpay Dashboard", icon: <Favicon><RazorIcon /></Favicon>, ls: -0.25 },
  { title: "Create Next App", icon: <NextFavicon />, ls: -0.15 },
  { title: "Smart Summarizer - AI Summary", icon: <NextFavicon />, ls: -0.3, fade: true, active: true },
];

const bookmarks = [
  { label: "Gmail", icon: <Gmail />, w: 85, ls: -0.4 },
  { label: "YouTube", icon: <YouTube />, w: 106.5, ls: -0.4 },
  { label: "Maps", icon: <Maps />, w: 84.5, ls: -0.3 },
  { label: "Google", icon: <Globe />, w: 90, ls: -0.05 },
];

export default function App() {
  return (
    <Screen>
      <Global />
      <TabStrip>
        <TabSearch>
          <svg width="12" height="8" viewBox="0 0 12 8" fill="none" stroke="#d8d8d8" strokeWidth="2"><path d="M1 1.200 6 6.200 11 1.200" /></svg>
        </TabSearch>
        {tabs.map((t, i) => (
          <TabBox key={t.title} $active={t.active}>
            {t.icon}
            <TabTitle $ls={t.ls} $fade={t.fade}>{t.title}</TabTitle>
            <TabClose><CloseGlyph color={t.active ? "#e6e6e6" : "#c9c9c9"} /></TabClose>
            {i < 4 && <TabDivider />}
          </TabBox>
        ))}
        <NewTab>
          <svg width="14" height="14" viewBox="0 0 14 14" stroke="#c9c9c9" strokeWidth="2"><path d="M7 .5v13M.5 7h13" /></svg>
        </NewTab>
        <WindowControls>
          <svg width="13" height="13" viewBox="0 0 13 13" stroke="#fff" strokeWidth="1.200"><path d="M0 6h13" /></svg>
          <svg width="14" height="14" viewBox="0 0 14 14" fill="none" stroke="#fff" strokeWidth="1.200"><rect x=".8" y="3.200" width="9.800" height="9.800" rx="1.800" /><path d="M3.200 1h7.300A2.600 2.600 0 0 1 13 3.500v7.300" /></svg>
          <svg width="14" height="14" viewBox="0 0 14 14" stroke="#fff" strokeWidth="1.200"><path d="M.6.6 13.400 13.400M13.400.6.6 13.400" /></svg>
        </WindowControls>
      </TabStrip>

      <Toolbar>
        <NavRow>
          <NavIcons>
            <svg width="18" height="18" viewBox="0 0 18 18" fill="none" stroke="#d0d0d0" strokeWidth="2"><path d="M17 9H2.500M9 1.800 1.800 9 9 16.200" /></svg>
            <svg width="18" height="18" viewBox="0 0 18 18" fill="none" stroke="#7c7c7c" strokeWidth="2"><path d="M1 9h14.500M9 1.800 16.200 9 9 16.200" /></svg>
            <svg width="18" height="18" viewBox="0 0 18 18" fill="none" stroke="#d0d0d0" strokeWidth="2"><path d="M15.800 10.300A7 7 0 1 1 14 4l1.500 1.600" /><path d="M16 .8V6.200H10.500" /></svg>
          </NavIcons>
          <Omnibox>
            <SiteInfo>
              <svg width="18" height="18" viewBox="0 0 18 18" fill="none" stroke="#e0e0e0" strokeWidth="1.800"><circle cx="9" cy="9" r="7.900" /><path d="M9 8v5M9 4.800v1.900" /></svg>
            </SiteInfo>
            <Url>http://<b>localhost</b>:3000</Url>
            <svg width="20" height="20" viewBox="0 0 20 20" fill="none" stroke="#d0d0d0" strokeWidth="1.800"><path d="M10 2.200 12.300 7.400 18 7.900 13.700 11.700 15 17.300 10 14.300 5 17.300 6.300 11.700 2 7.900 7.700 7.400Z" /></svg>
          </Omnibox>
          <Extensions>
            <Camera />
            <PuzzleSlot><Puzzle /></PuzzleSlot>
            <ToolDivider />
            <Avatar $size={25} $font={14}>S</Avatar>
            <MenuDots>
              <svg width="4" height="20" viewBox="0 0 4 20" fill="#d0d0d0"><circle cx="2" cy="3" r="2" /><circle cx="2" cy="10" r="2" /><circle cx="2" cy="17" r="2" /></svg>
            </MenuDots>
          </Extensions>
        </NavRow>
        <Bookmarks>
          <svg width="18" height="18" viewBox="0 0 18 18" fill="none" stroke="#bdbdbd" strokeWidth="2"><path d="M1 1h5.500v5.500H1ZM11.500 1H17v5.500h-5.500ZM1 11.500h5.500V17H1ZM11.500 11.500H17V17h-5.500Z" /></svg>
          <BookmarkDivider />
          {bookmarks.map((b) => (
            <Bookmark key={b.label} $w={b.w} $ls={b.ls}>{b.icon}<BookmarkLabel>{b.label}</BookmarkLabel></Bookmark>
          ))}
        </Bookmarks>
      </Toolbar>

      <Viewport>
        <Page>
          <Header>
            <Logo><FileText size={40} strokeWidth={2.2} /><LogoText>Smart-Summarizer</LogoText></Logo>
            <Links>
              <NavLink>Pricing</NavLink>
              <NavLink>Your Summaries</NavLink>
            </Links>
            <Account>
              <NavLink>Upload PDF</NavLink>
              <NavLink $dark>Pro</NavLink>
              <Avatar $size={35} $font={19}>S</Avatar>
            </Account>
          </Header>
          <Hero>
            <PoweredPill>
              <PoweredInner><Sparkles size={16} strokeWidth={1.8} />Powered by AI</PoweredInner>
            </PoweredPill>
            <Title>Transform PDFs into <Mark>concise</Mark> summaries</Title>
            <Subtitle>Get a beautiful summary reel of the document in seconds</Subtitle>
            <Cta><CtaText>Try Summarizer</CtaText><ArrowRight size={20} strokeWidth={2} /></Cta>
          </Hero>
          <NextBadge>
            <svg width="18" height="18" viewBox="0 0 18 18" fill="none" strokeWidth="2">
              <defs>
                <linearGradient id="nA" x1="0" y1="0" x2="1" y2="1"><stop offset=".6" stopColor="#fff" /><stop offset="1" stopColor="#fff" stopOpacity="0" /></linearGradient>
                <linearGradient id="nB" gradientUnits="userSpaceOnUse" x1="0" y1="1" x2="0" y2="12"><stop stopColor="#fff" /><stop offset="1" stopColor="#fff" stopOpacity="0" /></linearGradient>
              </defs>
              <path d="M3 17V3L16.500 19" stroke="url(#nA)" /><path d="M15 2v9.500h.01" stroke="url(#nB)" />
            </svg>
          </NextBadge>
          <SidePill><Brain /></SidePill>
        </Page>
        <Scrollbar>
          <svg width="12" height="9" viewBox="0 0 12 9"><path d="M6 .5 11.500 8.500H.5Z" fill="#a0a0a0" stroke="#a0a0a0" strokeLinejoin="round" /></svg>
          <Thumb />
          <svg width="12" height="9" viewBox="0 0 12 9"><path d="M6 8.500 11.500.5H.5Z" fill="#a0a0a0" stroke="#a0a0a0" strokeLinejoin="round" /></svg>
        </Scrollbar>
      </Viewport>

      <Taskbar>
        <Widget>
          <Finance />
          <div>
            <WidgetText>Finance headline</WidgetText>
            <WidgetText $dim>US consumer se...</WidgetText>
          </div>
        </Widget>
        <Apps>
          <StartSlot><Windows /></StartSlot>
          <SearchPill>
            <svg width="19" height="19" viewBox="0 0 19 19" fill="none" stroke="#e2e2e2" strokeWidth="2"><circle cx="8" cy="8" r="6.800" /><path d="M13 13l5 5" strokeWidth="2.600" /></svg>
            Search
          </SearchPill>
          <Slot><TaskView /></Slot>
          <Slot><Copilot /></Slot>
          <Slot><Edge /></Slot>
          <Slot><Store /></Slot>
          <Slot><Telegram /></Slot>
          <Slot><LinkedIn /></Slot>
          <Slot $run><Folder /></Slot>
          <Slot $run><BraveMark /></Slot>
          <Slot $run><Cursor /></Slot>
          <Slot $active><Chrome /><Overlay><Avatar $size={20} $font={12} $bg="#5427a5">S</Avatar></Overlay></Slot>
          <Slot $run><VsCode /></Slot>
        </Apps>
        <Tray>
          <svg width="14" height="9" viewBox="0 0 14 9" fill="none" stroke="#fff" strokeWidth="1.700"><path d="M1 7.500 7 1.500l6 6" /></svg>
          <Lang>ENG<br />IN</Lang>
          <Status><Wifi /><Speaker /><Battery /></Status>
          <div>
            <Clock $ls={-0.3}>01:58</Clock>
            <Clock $ls={0.1}>20-05-2025</Clock>
          </div>
        </Tray>
      </Taskbar>
    </Screen>
  );
}
